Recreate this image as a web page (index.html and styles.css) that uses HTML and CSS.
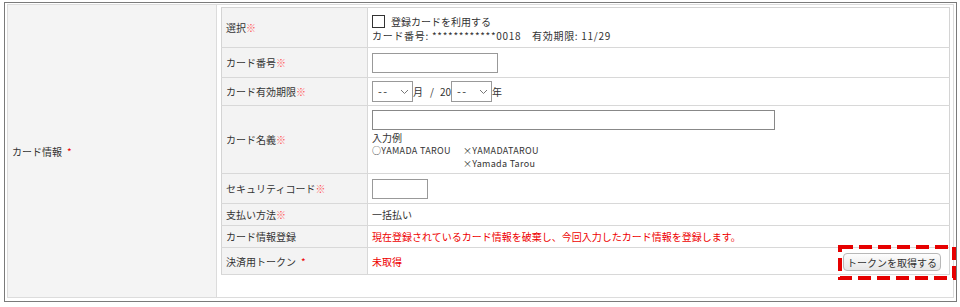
FILE: index.html
```html
<!DOCTYPE html>
<html lang="ja">
<head>
    <meta charset="UTF-8">
    <title>カード情報</title>
    <link rel="stylesheet" href="styles.css">
</head>
<body>
    <div class="frame">
        <div class="headCell"><span>カード情報<span class="star">*</span></span></div>
        <div class="bodyCell">
            <table class="form">
                <tr class="r1">
                    <th>選択<span class="req">※</span></th>
                    <td>
                        <label class="check"><span class="box"></span>登録カードを利用する</label>
                        <div class="saved">カード番号: ************0018　有効期限: 11/29</div>
                    </td>
                </tr>
                <tr class="r2">
                    <th>カード番号<span class="req">※</span></th>
                    <td><span class="field num"></span></td>
                </tr>
                <tr class="r3">
                    <th>カード有効期限<span class="req">※</span></th>
                    <td class="expiry">
                        <span class="sel">--<svg width="9" height="6" viewBox="0 0 9 6"><path d="M1 1l3.5 3.5L8 1" fill="none" stroke="#777" stroke-width="1"/></svg></span><span class="unit">月</span><span class="slash">/</span><span>20</span><span class="sel">--<svg width="9" height="6" viewBox="0 0 9 6"><path d="M1 1l3.5 3.5L8 1" fill="none" stroke="#777" stroke-width="1"/></svg></span><span class="unit">年</span>
                    </td>
                </tr>
                <tr class="r4">
                    <th>カード名義<span class="req">※</span></th>
                    <td>
                        <span class="field name"></span>
                        <div class="example">入力例</div>
                        <div class="small"><span class="ok">○YAMADA TAROU</span>×YAMADATAROU</div>
                        <div class="small indent">×Yamada Tarou</div>
                    </td>
                </tr>
                <tr class="r5">
                    <th>セキュリティコード<span class="req">※</span></th>
                    <td><span class="field cvc"></span></td>
                </tr>
                <tr class="r6">
                    <th>支払い方法<span class="req">※</span></th>
                    <td>一括払い</td>
                </tr>
                <tr class="r7">
                    <th>カード情報登録</th>
                    <td class="red">現在登録されているカード情報を破棄し、今回入力したカード情報を登録します。</td>
                </tr>
                <tr class="r8">
                    <th>決済用トークン<span class="star">*</span></th>
                    <td class="token">
                        <span class="red">未取得</span>
                        <button class="btn">トークンを取得する</button>
                        <svg class="mark" width="118" height="35" viewBox="0 0 118 35"><rect x="2" y="2" width="114" height="31" fill="none" stroke="#e60000" stroke-width="4" stroke-dasharray="13 6"/></svg>
                    </td>
                </tr>
            </table>
        </div>
    </div>
</body>
</html>
```
FILE: styles.css
```css
body{
    margin: 0;
    font-family: "Noto Sans CJK JP", "Noto Sans", sans-serif;
    font-size: 10px;
    color: #333;
    background: #fff;
}
.frame{
    display: flex;
    margin: 2px 0 0 4px;
    width: 953px;
    height: 300px;
    box-sizing: border-box;
    border: 1px solid #7a7a7a;
    padding: 1px 2px 3px 2px;
}
.headCell{
    width: 210px;
    box-sizing: border-box;
    background: #f4f4f4;
    border: 1px solid #dcdcdc;
    display: flex;
    align-items: center;
    padding: 0 0 0 4px;
}
.star{
    color: #e00;
    margin-left: 5px;
}
.req{
    color: #ff5a5a;
}
.bodyCell{
    flex: 1;
    border: 1px solid #dcdcdc;
    border-left: none;
    padding: 2px 3px 0 4px;
}
table.form{
    width: 729px;
    border-collapse: collapse;
    border: 1px solid #d4d4d4;
}
table.form th,
table.form td{
    border-bottom: 1px solid #d8d8d8;
    padding: 0 4px;
    text-align: left;
    font-weight: normal;
    vertical-align: middle;
    line-height: 13px;
}
table.form th{
    width: 137px;
    background: #f3f3f3;
    border-right: 1px solid #d8d8d8;
}
tr.r1{ height: 40px; }
tr.r2{ height: 30px; }
tr.r3{ height: 28px; }
tr.r4{ height: 68px; }
tr.r5{ height: 30px; }
tr.r6{ height: 22px; }
tr.r7{ height: 22px; }
tr.r8{ height: 27px; }
.check{
    display: flex;
    align-items: center;
    gap: 6px;
    line-height: 15px;
    padding-top: 1px;
}
.box{
    width: 11px;
    height: 11px;
    border: 1px solid #333;
    display: inline-block;
}
.saved{
    letter-spacing: 0.7px;
}
.field{
    display: block;
    height: 20px;
    box-sizing: border-box;
    border: 1px solid #999;
    background: #fff;
}
.field.num{ width: 126px; }
.field.name{ width: 403px; border-color: #888; }
.field.cvc{ width: 56px; }
.expiry{
    white-space: nowrap;
}
.expiry span{
    vertical-align: middle;
}
.sel{
    display: inline-flex;
    align-items: center;
    justify-content: space-between;
    width: 41px;
    height: 21px;
    box-sizing: border-box;
    border: 1px solid #999;
    padding: 0 3px 0 5px;
    font-size: 11px;
    letter-spacing: 1.5px;
}
.slash{
    margin: 0 6px 0 7px;
}
table.form td .example{
    margin-top: 2px;
    line-height: 12px;
}
table.form td .small{
    font-size: 9px;
    line-height: 13px;
    letter-spacing: 0.3px;
}
.ok{
    display: inline-block;
    width: 91px;
}
.indent{
    padding-left: 91px;
}
.red{
    color: #e00;
}
.token{
    position: relative;
}
.btn{
    position: absolute;
    right: 8px;
    top: 5px;
    width: 98px;
    height: 18px;
    font-family: inherit;
    font-size: 10px;
    color: #333;
    border: 1px solid #b8b8b8;
    border-radius: 4px;
    background: linear-gradient(#fdfdfd, #e6e6e6);
    padding: 0;
}
.mark{
    position: absolute;
    right: -7px;
    top: -3px;
}
```
